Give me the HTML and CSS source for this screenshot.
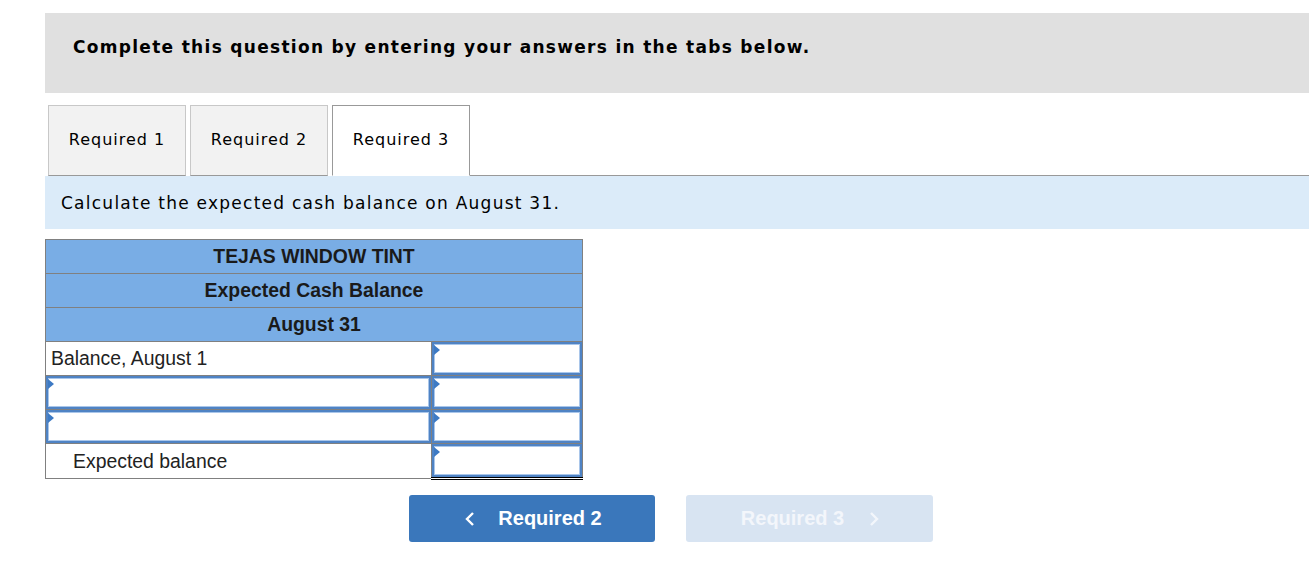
FILE: index.html
```html
<!DOCTYPE html>
<html lang="en">
<head>
  <meta charset="UTF-8">
  <title>Required 3</title>
  <link rel="stylesheet" href="styles.css">
</head>
<body>
  <div class="question">
    <div class="instructions">
      <p>Complete this question by entering your answers in the tabs below.</p>
    </div>

    <ul class="tabs">
      <li class="tab">Required 1</li>
      <li class="tab">Required 2</li>
      <li class="tab active">Required 3</li>
      <li class="tab-rest"></li>
    </ul>

    <div class="prompt">Calculate the expected cash balance on August 31.</div>

    <table class="worksheet">
      <colgroup>
        <col class="col-label">
        <col class="col-amount">
      </colgroup>
      <tr><th colspan="2">TEJAS WINDOW TINT</th></tr>
      <tr><th colspan="2">Expected Cash Balance</th></tr>
      <tr><th colspan="2">August 31</th></tr>
      <tr>
        <td class="label">Balance, August 1</td>
        <td><span class="field"><input type="text"></span></td>
      </tr>
      <tr>
        <td><span class="field"><input type="text"></span></td>
        <td><span class="field"><input type="text"></span></td>
      </tr>
      <tr>
        <td><span class="field"><input type="text"></span></td>
        <td><span class="field"><input type="text"></span></td>
      </tr>
      <tr class="total">
        <td class="label indent">Expected balance</td>
        <td class="amount"><span class="field"><input type="text"></span></td>
      </tr>
    </table>

    <div class="nav">
      <button class="nav-btn">
        <svg width="12" height="16" viewBox="0 0 12 16"><polyline points="9,2 3,8 9,14" fill="none" stroke="currentColor" stroke-width="2.4"/></svg>
        <span>Required 2</span>
      </button>
      <button class="nav-btn disabled">
        <span>Required 3</span>
        <svg width="12" height="16" viewBox="0 0 12 16"><polyline points="3,2 9,8 3,14" fill="none" stroke="currentColor" stroke-width="2.4"/></svg>
      </button>
    </div>
  </div>
</body>
</html>
```

FILE: styles.css
```css
body {
  margin: 0;
  background: #fff;
  color: #000;
  font-family: "DejaVu Sans", Verdana, sans-serif;
}
.question {
  margin: 13px 0 0 45px;
}
.instructions {
  background-color: #e0e0e0;
  height: 80px;
  padding: 0 28px;
  display: flex;
  align-items: center;
}
.instructions p {
  margin: 0 0 12px;
  font-size: 17px;
  letter-spacing: 1.3px;
  font-weight: bold;
}
.tabs {
  list-style: none;
  margin: 12px 0 0;
  padding: 0 0 0 3px;
  display: flex;
  gap: 4px;
  height: 71px;
}
.tab {
  width: 136px;
  border: 1px solid #c8c8c8;
  border-bottom: 1px solid #999;
  background-color: #f2f2f2;
  font-size: 16px;
  letter-spacing: 1px;
  display: flex;
  align-items: center;
  justify-content: center;
  padding-bottom: 2px;
}
.tab.active {
  background-color: #fff;
  border-color: #999;
  border-bottom-color: #fff;
}
.tab-rest {
  flex: 1;
  border-bottom: 1px solid #999;
  margin-left: -4px;
}
.prompt {
  background-color: #dbebf9;
  height: 53px;
  padding: 0 16px;
  display: flex;
  align-items: center;
  font-size: 17px;
  letter-spacing: 1.25px;
}
.worksheet {
  margin-top: 10px;
  border-collapse: collapse;
  table-layout: fixed;
  width: 537px;
  font-family: "Liberation Sans", Arial, sans-serif;
  font-size: 19.4px;
}
.col-label {
  width: 386px;
}
.col-amount {
  width: 151px;
}
.worksheet th {
  background-color: #79ade5;
  border: 1px solid #808080;
  height: 33px;
  padding: 0;
  font-weight: bold;
  color: #1a1a1a;
}
.worksheet td {
  border: 1px solid #808080;
  height: 33px;
  padding: 0;
  color: #222;
}
.worksheet .label {
  padding-left: 5px;
}
.worksheet .indent {
  padding-left: 27px;
}
.worksheet .total td {
  border-top: 1px solid #000;
}
.worksheet .total .amount {
  border-bottom: 3px double #000;
}
.field {
  position: relative;
  display: block;
  height: 33px;
}
.field::before {
  content: "";
  position: absolute;
  left: 2px;
  top: 3px;
  border-left: 6px solid #3d7ac4;
  border-top: 5px solid transparent;
  border-bottom: 5px solid transparent;
}
.field input {
  box-sizing: border-box;
  width: 100%;
  height: 100%;
  margin: 0;
  border: 2px solid #4f83c4;
  box-shadow: inset 0 0 0 1px #a9c6ea;
  background: #fff;
  font: inherit;
  outline: none;
}
.nav {
  display: flex;
  gap: 31px;
  margin: 15px 0 0 364px;
}
.nav-btn {
  width: 246px;
  height: 47px;
  border: none;
  border-radius: 3px;
  background-color: #3a77bb;
  color: #fff;
  font-family: "Liberation Sans", Arial, sans-serif;
  font-size: 20px;
  font-weight: bold;
  display: flex;
  align-items: center;
  justify-content: center;
  gap: 22px;
  padding: 0 0 0 2px;
}
.nav-btn.disabled {
  background-color: #d8e4f2;
  color: #f3f6fb;
  width: 247px;
  gap: 24px;
}
```
